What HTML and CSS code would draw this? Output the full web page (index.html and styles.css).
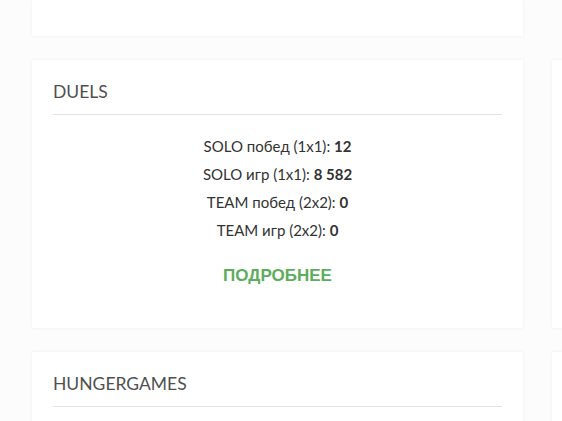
FILE: index.html
```html
<!DOCTYPE html>
<html lang="ru">
<head>
<meta charset="utf-8">
<title>Stats</title>
<link rel="stylesheet" href="styles.css">
</head>
<body>
<div class="grid">
  <div class="card card-tail"></div>
  <div class="empty"></div>

  <div class="card">
    <h2 class="card-title">DUELS</h2>
    <div class="stats">
      <div class="stat">SOLO побед (1x1): <b>12</b></div>
      <div class="stat">SOLO игр (1x1): <b>8 582</b></div>
      <div class="stat">TEAM побед (2x2): <b>0</b></div>
      <div class="stat">TEAM игр (2x2): <b>0</b></div>
    </div>
    <a class="more" href="#">ПОДРОБНЕЕ</a>
  </div>
  <div class="card"></div>

  <div class="card">
    <h2 class="card-title">HUNGERGAMES</h2>
  </div>
  <div class="card"></div>
</div>
</body>
</html>
```
FILE: styles.css
```css
html, body {
  margin: 0;
  padding: 0;
  background: #fcfcfc;
  font-family: Lato, "Noto Sans", sans-serif;
}

.grid {
  display: grid;
  grid-template-columns: 491px 491px;
  column-gap: 29px;
  row-gap: 24px;
  padding-left: 32px;
}

.card {
  background: #ffffff;
  box-shadow: 0 0 4px rgba(0, 0, 0, 0.05);
  padding: 20px 21px 41px;
  box-sizing: border-box;
}

.card-tail {
  height: 36px;
  padding: 0;
}

.empty {
  height: 36px;
}

.card-title {
  margin: 0;
  font-size: 17.5px;
  line-height: 24px;
  font-weight: 400;
  color: #505050;
  padding-bottom: 10px;
  border-bottom: 1px solid #e3e3e3;
}

.stats {
  margin-top: 17px;
  text-align: center;
  color: #333333;
  font-size: 15px;
  line-height: 28px;
}

.stat b {
  font-weight: 700;
}

.more {
  display: block;
  margin-top: 22px;
  margin-bottom: 1px;
  text-align: center;
  font-family: "Liberation Sans", Arial, sans-serif;
  font-weight: 700;
  font-size: 17px;
  line-height: 20px;
  color: #5cad5c;
  text-decoration: none;
}
```
